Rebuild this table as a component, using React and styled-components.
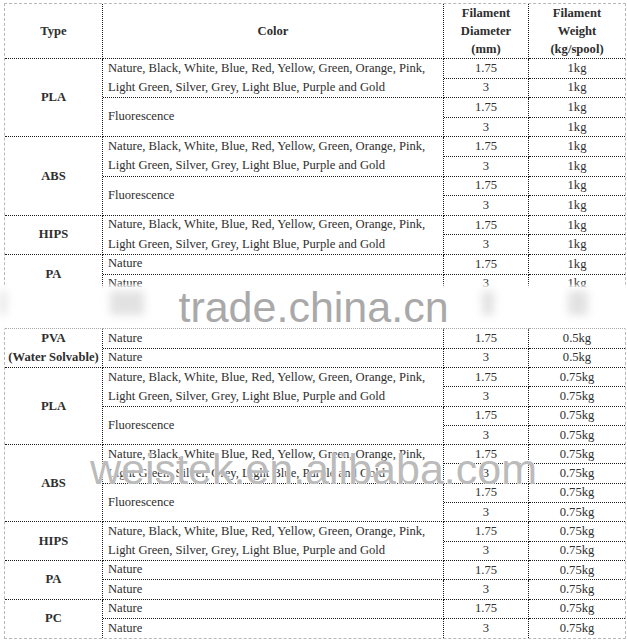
import React from 'react';
import styled, { createGlobalStyle } from 'styled-components';

const GlobalStyle = createGlobalStyle`
  html, body {
    margin: 0;
    padding: 0;
    background: #ffffff;
  }
`;

const Page = styled.div`
  position: relative;
  width: 627px;
  height: 643px;
  padding: 3px 2px 0 4px;
  box-sizing: border-box;
  overflow: hidden;
  font-family: "Liberation Serif", "Times New Roman", serif;
  font-size: 12.6px;
  color: #2e2e2e;
`;

const Grid = styled.div`
  display: grid;
  grid-template-columns: 98px 341px 85px 96px;
  grid-template-rows: ${(p) => p.$rows};
  border: 1px dashed #b8b8b8;
  width: max-content;
`;

const Cell = styled.div`
  box-sizing: border-box;
  border-right: ${(p) => (p.$edge ? 'none' : '1px dotted #1a1a1a')};
  border-bottom: ${(p) => (p.$end ? 'none' : '1px dotted #1a1a1a')};
  display: flex;
  align-items: center;
  overflow: hidden;
  white-space: nowrap;
`;

const HeadCell = styled(Cell)`
  grid-column: ${(p) => p.$col};
  flex-direction: column;
  justify-content: center;
  font-weight: bold;
  line-height: 18px;
  text-align: center;
`;

const TypeCell = styled(Cell)`
  grid-column: 1;
  grid-row: span ${(p) => p.$span};
  flex-direction: column;
  justify-content: center;
  font-weight: bold;
  line-height: 19px;
`;

const ColorCell = styled(Cell)`
  grid-column: 2;
  grid-row: span ${(p) => p.$span};
  padding-left: 5px;
`;

const ColorText = styled.div`
  line-height: ${(p) => p.$lh}px;
`;

const NumCell = styled(Cell)`
  grid-column: ${(p) => p.$col};
  justify-content: center;
`;

const Band = styled.div`
  position: absolute;
  left: 0;
  right: 0;
  top: 283px;
  height: 48px;
  background: linear-gradient(
    to bottom,
    rgba(255, 255, 255, 0) 0,
    #ffffff 5px,
    #ffffff calc(100% - 4px),
    rgba(255, 255, 255, 0) 100%
  );
`;

const Smudge = styled.div`
  position: absolute;
  top: 8px;
  height: 24px;
  left: ${(p) => p.$x}px;
  width: ${(p) => p.$w}px;
  background: #d6d6d6;
  filter: blur(4px);
  opacity: 0.7;
`;

const Watermark = styled.div`
  position: absolute;
  left: 0;
  right: 0;
  text-align: center;
  font-family: "Liberation Sans", Arial, sans-serif;
  font-size: 43px;
  line-height: 48px;
  white-space: nowrap;
`;

const TradeMark = styled(Watermark)`
  top: 0;
  color: #a9a9a9;
`;

const ShopMark = styled(Watermark)`
  top: 445px;
  color: rgba(175, 175, 175, 0.85);
  text-shadow: 0 0 1px #fff, 0 0 2px #fff;
`;

const FULL = [
  'Nature, Black, White, Blue, Red, Yellow, Green, Orange, Pink,',
  'Light Green, Silver, Grey, Light Blue, Purple and Gold',
];

const fourRows = (w) => [
  { lines: FULL, rows: [['1.75', w], ['3', w]] },
  { lines: ['Fluorescence'], rows: [['1.75', w], ['3', w]] },
];

const twoNature = (w) => [
  { lines: ['Nature'], rows: [['1.75', w]] },
  { lines: ['Nature'], rows: [['3', w]] },
];

const groups = [
  { type: ['PLA'], h: 19.6, sets: fourRows('1kg') },
  { type: ['ABS'], h: 19.6, sets: fourRows('1kg') },
  { type: ['HIPS'], h: 19.6, sets: [{ lines: FULL, rows: [['1.75', '1kg'], ['3', '1kg']] }] },
  { type: ['PA'], h: 19.6, sets: twoNature('1kg') },
  { type: ['PC'], h: 17.65, sets: twoNature('1kg') },
  { type: ['PVA', '(Water Solvable)'], h: 19.3, sets: twoNature('0.5kg') },
  { type: ['PLA'], h: 19.3, sets: fourRows('0.75kg') },
  { type: ['ABS'], h: 19.3, sets: fourRows('0.75kg') },
  { type: ['HIPS'], h: 19.3, sets: [{ lines: FULL, rows: [['1.75', '0.75kg'], ['3', '0.75kg']] }] },
  { type: ['PA'], h: 19.3, sets: twoNature('0.75kg') },
  { type: ['PC'], h: 19.3, sets: twoNature('0.75kg') },
];

const rowTemplate = ['55px']
  .concat(
    groups.flatMap((g) =>
      g.sets.flatMap((s) => s.rows.map(() => `${g.h}px`))
    )
  )
  .join(' ');

const App = () => {
  return (
    <Page>
      <GlobalStyle />
      <Grid $rows={rowTemplate}>
        <HeadCell $col={1}>Type</HeadCell>
        <HeadCell $col={2}>Color</HeadCell>
        <HeadCell $col={3}>
          <span>Filament</span>
          <span>Diameter</span>
          <span>(mm)</span>
        </HeadCell>
        <HeadCell $col={4} $edge>
          <span>Filament</span>
          <span>Weight</span>
          <span>(kg/spool)</span>
        </HeadCell>

        {groups.map((g, gi) => {
          const end = gi === groups.length - 1;
          const span = g.sets.reduce((n, s) => n + s.rows.length, 0);
          return (
            <React.Fragment key={gi}>
              <TypeCell $span={span} $end={end}>
                {g.type.map((t) => (
                  <span key={t}>{t}</span>
                ))}
              </TypeCell>
              {g.sets.map((s, si) => {
                const lastSet = end && si === g.sets.length - 1;
                return (
                  <React.Fragment key={si}>
                    <ColorCell $span={s.rows.length} $end={lastSet}>
                      <ColorText $lh={g.h}>
                        {s.lines.map((l, li) => (
                          <div key={li}>{l}</div>
                        ))}
                      </ColorText>
                    </ColorCell>
                    {s.rows.map(([d, w], ri) => {
                      const lastRow = lastSet && ri === s.rows.length - 1;
                      return (
                        <React.Fragment key={ri}>
                          <NumCell $col={3} $end={lastRow}>{d}</NumCell>
                          <NumCell $col={4} $end={lastRow} $edge>{w}</NumCell>
                        </React.Fragment>
                      );
                    })}
                  </React.Fragment>
                );
              })}
            </React.Fragment>
          );
        })}
      </Grid>

      <Band>
        <Smudge $x={0} $w={6} />
        <Smudge $x={110} $w={34} />
        <Smudge $x={482} $w={12} />
        <Smudge $x={568} $w={20} />
        <TradeMark>trade.china.cn</TradeMark>
      </Band>
      <ShopMark>weistek.en.alibaba.com</ShopMark>
    </Page>
  );
};

export default App;
